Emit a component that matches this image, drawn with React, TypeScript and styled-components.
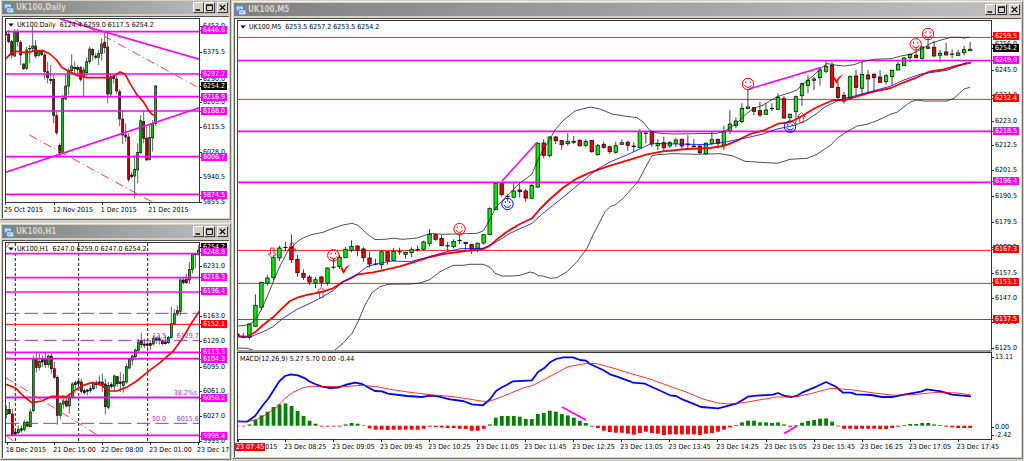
import React from "react";
import styled, { createGlobalStyle } from "styled-components";

const GlobalStyle = createGlobalStyle`
  *, *::before, *::after { box-sizing: border-box; }
  body {
    margin: 0;
    background: #d4d0c8;
    font-family: "DejaVu Sans Condensed", "DejaVu Sans", sans-serif;
    font-size: 7px;
    line-height: 8px;
    color: #000;
  }
`;

const MAGENTA = "#ff00ff";
const RED = "#ff0000";
const BLUE = "#0000ff";
const PURPLE = "#9a32cd";

/* ---------- layout ---------- */

const Desktop = styled.main`
  display: grid;
  grid-template-columns: minmax(0, 231fr) minmax(0, 791fr);
  column-gap: 1px;
  padding-right: 1px;
  height: 100vh;
  min-height: 320px;
  overflow: hidden;
`;

const SideColumn = styled.div`
  display: grid;
  grid-template-rows: minmax(0, 221fr) minmax(0, 237fr);
  row-gap: 3px;
  min-height: 0;
  margin: -1px 0 1px;
`;

const MainColumn = styled.div`
  display: grid;
  min-height: 0;
  padding: 1px 0 2px;
`;

const Frame = styled.section`
  display: flex;
  flex-direction: column;
  min-width: 0;
  min-height: 0;
  padding: 1px;
  border: 1px solid;
  border-color: #f4f2ee #77756e #77756e #f4f2ee;
  background: #d4d0c8;
`;

const TitleBar = styled.header`
  display: flex;
  align-items: center;
  height: 13px;
  flex: none;
  padding: 0 1px 0 2px;
  margin-bottom: 2px;
  background: linear-gradient(90deg, #808080, #c0c0c0);
`;

const Title = styled.h2`
  flex: 1;
  margin: 0 0 0 2px;
  font-size: 8px;
  line-height: 12px;
  font-weight: 700;
  color: #d4d0c8;
`;

const TitleButton = styled.button<{ $apart?: boolean }>`
  display: grid;
  place-items: center;
  width: 11px;
  height: 11px;
  margin-left: ${(p) => (p.$apart ? 2 : 0)}px;
  padding: 0;
  border: 1px solid;
  border-color: #fff #404040 #404040 #fff;
  background: #d4d0c8;
`;

const Client = styled.div<{ $footer: number }>`
  flex: 1;
  min-height: 0;
  display: grid;
  grid-template-columns: minmax(0, 1fr) 29px;
  grid-template-rows: minmax(0, 1fr) ${(p) => p.$footer}px;
  padding: 1px 0 0 2px;
  border: solid #55534e;
  border-width: 1px 0 0 1px;
  background: #fff;
  overflow: hidden;
`;

const Panes = styled.div<{ $split?: boolean }>`
  grid-column: 1 / -1;
  display: grid;
  grid-template-columns: minmax(0, 1fr) 29px;
  grid-template-rows: ${(p) => (p.$split ? "minmax(0, 330fr) minmax(0, 88fr)" : "minmax(0, 1fr)")};
  row-gap: 2px;
  min-height: 0;
`;

const Plot = styled.div<{ $open?: boolean; $edge?: string }>`
  position: relative;
  min-height: 0;
  border: 1px solid #333;
  border-left-color: ${(p) => p.$edge ?? "#333"};
  border-bottom-width: ${(p) => (p.$open ? 0 : 1)}px;
  box-shadow: ${(p) => (p.$open ? "0 2px 0 #9c9c9c" : "none")};
`;

const Drawing = styled.svg`
  display: block;
  position: absolute;
  inset: 0;
  width: 100%;
  height: 100%;
  overflow: hidden;
`;

const Legend = styled.p`
  position: absolute;
  top: 2px;
  left: 2px;
  display: flex;
  align-items: center;
  gap: 3px;
  margin: 0;
  white-space: pre;
`;

const Axis = styled.ol`
  position: relative;
  margin: 0;
  padding: 0;
  list-style: none;
`;

const PriceLabel = styled.li<{ $fill?: string }>`
  position: absolute;
  left: 1px;
  width: 26px;
  height: 8px;
  padding-left: 2px;
  transform: translateY(-50%);
  white-space: nowrap;
  background: ${(p) => p.$fill ?? "transparent"};
  color: ${(p) => (p.$fill ? "#fff" : "#000")};
  &::before {
    content: "";
    position: absolute;
    left: -1px;
    top: 4px;
    width: 2px;
    height: 1px;
    background: ${(p) => p.$fill ?? "#333"};
  }
`;

const TimeLabel = styled.li<{ $fill?: string }>`
  position: absolute;
  top: 3px;
  padding: 0 1px;
  white-space: nowrap;
  background: ${(p) => p.$fill ?? "transparent"};
  color: ${(p) => (p.$fill ? "#fff" : "#000")};
  &::before {
    content: "";
    position: absolute;
    left: 2px;
    top: -3px;
    width: 1px;
    height: 2px;
    background: #333;
  }
`;

const LevelLabel = styled.span`
  position: absolute;
  transform: translateY(-50%);
  color: ${PURPLE};
  white-space: nowrap;
`;

/* ---------- data types and helpers ---------- */

/** Drawing area in chart units: left, top, width, height. */
type View = [number, number, number, number];
/** Centre of the label, its text, and the fill of a highlighted label. */
type Tick = [number, string, string?];

const share = (value: number, start: number, size: number) => `${((value - start) / size) * 100}%`;

interface CandlesProps {
  data: string;
  x0: number;
  step: number;
  width: number;
  line: number;
  up: string;
  down: string;
}

/** Each entry: high, body top, body bottom, low, direction (g up, r down, k flat). */
function Candles({ data, x0, step, width, line, up, down }: CandlesProps) {
  return (
    <g stroke="#111" strokeWidth={line}>
      {data
        .trim()
        .split(/\s*\/\s*/)
        .map((entry, i) => {
          const [high, top, bottom, low, dir] = entry.split(" ");
          const x = x0 + step * i;
          const h = Number(bottom) - Number(top);
          return (
            <g key={i}>
              <line x1={x} x2={x} y1={high} y2={low} />
              <rect
                x={x - width / 2}
                y={top}
                width={width}
                height={Math.max(h, 0.2)}
                fill={dir === "g" ? up : dir === "r" ? down : "#111"}
              />
            </g>
          );
        })}
    </g>
  );
}

interface CurveProps {
  points: string;
  color: string;
  width: number;
  dash?: string;
}

const Curve = ({ points, color, width, dash }: CurveProps) => (
  <polyline points={points} fill="none" stroke={color} strokeWidth={width} strokeDasharray={dash} strokeLinejoin="round" />
);

interface LevelsProps {
  view: View;
  at: number[];
  color: string;
  width: number;
  dash?: string;
}

const Levels = ({ view, at, color, width, dash }: LevelsProps) => (
  <g stroke={color} strokeWidth={width} strokeDasharray={dash}>
    {at.map((y) => (
      <line key={y} x1={view[0]} x2={view[0] + view[2]} y1={y} y2={y} />
    ))}
  </g>
);

function Smiley({ x, y, color }: { x: number; y: number; color: string }) {
  return (
    <g transform={`translate(${x} ${y})`} fill="none" stroke={color} strokeWidth="1">
      <circle r="5.7" />
      <path d="M-2.2 -2.6v1.8M2.2 -2.6v1.8M-3.4 1.2Q-2.6 3.4 0 3.4T3.4 1.2" />
    </g>
  );
}

function Arrow({ x, y, up }: { x: number; y: number; up?: boolean }) {
  return (
    <path
      transform={`translate(${x} ${y}) scale(1 ${up ? -1 : 1})`}
      d="M-1.8 -5H1.8V1H4L0 5L-4 1H-1.8Z"
      fill="none"
      stroke={RED}
      strokeWidth="0.8"
    />
  );
}

const Check = ({ x, y }: { x: number; y: number }) => (
  <path transform={`translate(${x} ${y})`} d="M0 4L2 3L3.4 6Q6 2 10.5 0Q6 4 3.4 10Z" fill={RED} />
);

/* ---------- window chrome ---------- */

const AppIcon = () => (
  <svg width="10" height="10" viewBox="0 0 10 10" aria-hidden="true">
    <rect x="0" y="0" width="7.4" height="6" fill="#4f8fe0" />
    <rect x="0.7" y="1.6" width="6" height="3.8" fill="#e8f2ff" />
    <path d="M1.3 4.6V3M3 4.4V2.4M4.6 4V2.4" stroke="#4f8fe0" strokeWidth="0.7" />
    <rect x="2.6" y="4" width="7.4" height="6" fill="#4f8fe0" />
    <rect x="3.3" y="5.4" width="6" height="3.9" fill="#e8f2ff" />
    <path d="M4 8.6L5.4 6.4L6.7 8.2L8.4 6.2" stroke="#3f7fd6" strokeWidth="0.7" fill="none" />
  </svg>
);

function ChartWindow({ title, footer = 15, children }: { title: string; footer?: number; children: React.ReactNode }) {
  return (
    <Frame aria-label={title}>
      <TitleBar>
        <AppIcon />
        <Title>{title}</Title>
        <TitleButton aria-label="Minimize">
          <svg width="7" height="7" viewBox="0 0 7 7"><path d="M0.5 6h4.5" stroke="#000" strokeWidth="1.4" /></svg>
        </TitleButton>
        <TitleButton aria-label="Maximize">
          <svg width="7" height="7" viewBox="0 0 7 7"><path d="M0.5 0.8h6v5.7h-6zM0.5 1.4h6" fill="none" stroke="#000" strokeWidth="0.9" /></svg>
        </TitleButton>
        <TitleButton aria-label="Close" $apart>
          <svg width="7" height="7" viewBox="0 0 7 7"><path d="M0.8 0.8L6.2 6.2M6.2 0.8L0.8 6.2" stroke="#000" strokeWidth="1.2" /></svg>
        </TitleButton>
      </TitleBar>
      <Client $footer={footer}>{children}</Client>
    </Frame>
  );
}

const Quote = ({ text }: { text: string }) => (
  <Legend>
    <svg width="6" height="4" viewBox="0 0 6 4" aria-hidden="true"><path d="M0.4 0.6h5.2L3 3.6z" /></svg>
    <span>{text}</span>
  </Legend>
);

function PriceAxis({ ticks, view }: { ticks: Tick[]; view: View }) {
  return (
    <Axis>
      {ticks.map(([y, text, fill]) => (
        <PriceLabel key={text + y} $fill={fill} style={{ top: share(y, view[1], view[3]) }}>{text}</PriceLabel>
      ))}
    </Axis>
  );
}

function TimeAxis({ ticks, view }: { ticks: Tick[]; view: View }) {
  return (
    <Axis>
      {ticks.map(([x, text, fill]) => (
        <TimeLabel key={text} $fill={fill} style={{ left: share(x, view[0], view[2]) }}>{text}</TimeLabel>
      ))}
    </Axis>
  );
}

const box = (view: View) => view.join(" ");

/* ---------- daily chart ---------- */

const DAILY_VIEW: View = [18, 57, 579, 549];

const DAILY_CANDLES = `92 96 105 110 r/90 103 125 130 r/120 125 165 175 r/87 96 168 172 g/87 96 125 140 r/120 127 165 195 r/
190 192 206 210 r/140 150 205 210 g/135 145 147 190 k/80 138 145 155 g/120 138 168 175 r/150 153 166 170 g/150 153 163 168 r/
158 165 215 238 r/185 215 233 250 r/195 238 241 252 k/225 238 346 370 r/335 347 398 405 r/430 436 458 468 r/285 295 460 462 g/
225 258 297 300 g/205 212 258 285 g/163 198 212 218 g/185 202 206 225 k/195 202 208 225 k/198 203 238 245 r/200 210 228 288 g/
172 185 218 228 g/140 147 185 192 g/145 148 165 182 r/160 168 172 178 k/150 160 172 195 g/115 132 160 182 g/97 127 143 160 r/
97 141 282 310 r/220 231 282 292 g/225 229 236 250 r/228 237 273 283 r/268 275 357 378 r/332 357 405 432 r/370 405 411 425 k/
400 411 538 546 r/515 525 530 535 k/465 508 528 596 g/430 457 510 550 g/345 362 458 462 g/332 364 415 430 r/380 414 480 482 r/
375 412 478 482 g/360 370 414 455 g/255 258 370 378 g`;

const DAILY_PRICES: Tick[] = [
  [82, "6453.0"], [94, "6446.6", MAGENTA], [157, "6375.5"], [237, "6290.0"], [222, "6297.7", MAGENTA],
  [306, "6203.0"], [260, "6254.2", "#000"], [290, "6216.9", MAGENTA], [332, "6168.0", MAGENTA], [380, "6115.5"],
  [454, "6028.0"], [469, "6006.7", MAGENTA], [528, "5940.5"], [603, "5855.5"], [582, "5874.5", MAGENTA],
];

const DAILY_TIMES: Tick[] = [[9, "25 Oct 2015"], [155, "12 Nov 2015"], [299, "1 Dec 2015"], [442, "21 Dec 2015"]];

const DailyChart = () => (
  <ChartWindow title="UK100,Daily">
    <Panes>
      <Plot>
        <Drawing viewBox={box(DAILY_VIEW)} preserveAspectRatio="none" role="img" aria-label="Daily candles">
          <Candles data={DAILY_CANDLES} x0={17} step={9} width={6} line={2} up="#00c000" down="#b00000" />
          <Levels view={DAILY_VIEW} at={[95, 222, 290, 333, 470, 583]} color={MAGENTA} width={5} />
          <Curve points="180,57 598,178" color={MAGENTA} width={5} />
          <Curve points="17,517 598,323" color={MAGENTA} width={5} />
          <Curve points="225,60 590,260" color="#ff4040" width={3} dash="26 10 3 10" />
          <Curve points="88,405 455,605" color="#ff4040" width={3} dash="26 10 3 10" />
          <Curve
            points="17,176 30,163 50,154 80,158 105,152 130,152 150,162 170,180 185,202 205,213 230,226 260,233 330,233 345,226 360,216 375,222 390,250 410,283 430,305 445,330 455,342 467,347"
            color={RED}
            width={5}
          />
        </Drawing>
        <Quote text="UK100,Daily  6124.4 6259.0 6117.5 6254.2" />
      </Plot>
      <PriceAxis ticks={DAILY_PRICES} view={DAILY_VIEW} />
    </Panes>
    <TimeAxis ticks={DAILY_TIMES} view={[15, 0, 585, 0]} />
  </ChartWindow>
);

/* ---------- hourly chart ---------- */

const HOURLY_VIEW: View = [18, 63, 579, 597];

const HOURLY_CANDLES = `550 562 578 590 g/540 562 575 578 r/560 576 640 642 r/625 630 636 640 k/610 622 632 636 g/610 620 625 632 k/
595 602 622 628 g/598 600 612 615 r/560 570 614 616 g/400 410 566 570 g/390 410 436 452 r/395 418 436 445 g/400 412 420 435 k/
392 412 428 438 r/398 402 428 436 g/395 402 440 455 r/420 440 466 470 r/460 466 580 608 r/540 545 580 592 g/520 537 546 560 g/
525 537 552 556 r/515 525 552 575 g/480 486 526 530 g/475 482 488 505 k/475 478 484 500 k/470 480 508 515 r/500 506 512 518 k/
500 504 508 520 k/490 500 505 512 k/478 485 500 505 g/475 482 488 500 k/460 480 484 490 k/455 480 490 510 r/470 486 554 577 r/
480 490 556 562 g/480 488 494 500 k/458 462 492 510 g/462 464 485 495 r/450 480 484 510 k/455 478 490 512 g/425 434 480 485 g/
408 412 438 442 g/398 402 414 430 g/380 384 404 412 g/350 360 385 395 g/333 357 368 378 r/350 366 370 378 k/355 366 370 378 k/
355 364 370 385 k/340 350 366 370 g/345 350 354 365 k/340 350 354 368 k/352 356 365 370 r/340 360 365 368 k/342 346 362 366 g/
255 305 346 350 g/262 275 305 310 g/250 266 276 282 r/168 174 268 280 g/165 174 182 188 k/155 172 182 186 r/120 142 174 186 g/
95 98 142 155 g/94 96 98 138 k/70 85 97 100 g`;

const HOURLY_PRICES: Tick[] = [
  [78, "6254.2", "#000"], [94, "6248.8", MAGENTA], [134, "6231.0"], [166, "6216.3", MAGENTA], [209, "6196.4", MAGENTA],
  [283, "6163.0"], [306, "6152.1", RED], [358, "6129.0"], [391, "6113.3", MAGENTA], [410, "6104.3", MAGENTA],
  [433, "6095.0"], [506, "6061.0"], [527, "6050.2", MAGENTA], [580, "6027.0"], [655, "5993.0"], [639, "5998.4", MAGENTA],
];

const HOURLY_TIMES: Tick[] = [
  [14, "18 Dec 2015"], [157, "21 Dec 15:00"], [300, "22 Dec 08:00"], [445, "23 Dec 01:00"], [588, "23 Dec 17:00"],
];

const FIBO_LABELS: [number, number, string][] = [
  [457, 342, "12.5"], [530, 342, "6129.7"], [521, 513, "38.2%s"], [456, 592, "50.0"], [530, 592, "6015.6"],
];

const HourlyChart = () => (
  <ChartWindow title="UK100,H1">
    <Panes>
      <Plot>
        <Drawing viewBox={box(HOURLY_VIEW)} preserveAspectRatio="none" role="img" aria-label="Hourly candles">
          <g stroke="#222" strokeWidth="3" strokeDasharray="9 6">
            <path d="M46 63V660M236 63V660M443 63V660" />
          </g>
          <Candles data={HOURLY_CANDLES} x0={19} step={9} width={6} line={2} up="#00c000" down="#b00000" />
          <Levels view={HOURLY_VIEW} at={[274, 355, 604]} color={PURPLE} width={3} dash="40 16" />
          <Levels view={HOURLY_VIEW} at={[307]} color={RED} width={3} />
          <Levels view={HOURLY_VIEW} at={[95, 167, 210, 391, 410, 527, 640]} color={MAGENTA} width={5} />
          <Levels view={HOURLY_VIEW} at={[525]} color={PURPLE} width={2} />
          <Curve points="18,467 310,650" color="#ff4040" width={3} dash="26 10 3 10" />
          <Curve points="18,640 40,657" color="#ff4040" width={3} />
          <Curve points="16,80 28,63" color="#ff4040" width={3} />
          <Curve
            points="18,487 45,497 70,522 95,542 125,537 155,523 200,524 225,505 250,490 275,482 300,488 330,507 350,507 380,496 410,477 445,448 480,422 520,387 550,345 575,302 598,268"
            color={RED}
            width={5}
          />
        </Drawing>
        {FIBO_LABELS.map(([x, y, text]) => (
          <LevelLabel
            key={text}
            style={{ left: share(x, HOURLY_VIEW[0], HOURLY_VIEW[2]), top: share(y, HOURLY_VIEW[1], HOURLY_VIEW[3]) }}
          >
            {text}
          </LevelLabel>
        ))}
        <Quote text="UK100,H1  6247.0 6259.0 6247.0 6254.2" />
      </Plot>
      <PriceAxis ticks={HOURLY_PRICES} view={HOURLY_VIEW} />
    </Panes>
    <TimeAxis ticks={HOURLY_TIMES} view={[15, 0, 585, 0]} />
  </ChartWindow>
);

/* ---------- five-minute chart ---------- */

const M5_VIEW: View = [238, 21, 753, 329];
const MACD_VIEW: View = [238, 353, 753, 86];
const M5_X0 = 237.4;
const M5_STEP = 6.006;

const M5_CANDLES = `333 334 336 338 k/333 336.5 337.3 338 k/324 324 337.3 339.7 g/294.3 305.3 326.3 326.3 g/281.7 282.3 307.3 310.3 g/
275 278 283 285.3 g/255 257.3 277.7 280 g/245.7 248 258 261 g/241.7 247.3 247.6 251 k/234.3 247 259.7 263 r/255 259.3 272.7 276.7 r/
269.3 273.3 277.3 280 r/275 277 282 285 r/277 279.7 283 288 g/275.7 277 282.3 286.3 r/267.3 268 283 285.7 g/259 267 267.3 269.3 k/
255 257.3 266.7 269 g/247 249.3 257.7 257.7 g/240.3 246.3 250.3 252.3 g/245.3 246 250.3 256.3 r/247.3 249 257.7 261.7 r/
251.7 258 264 267.7 r/258.7 264 264.3 265.3 k/250.3 251.7 264.7 269 g/251.7 251.7 261 264.7 r/248 251.3 260.3 261 g/
247.7 251.7 252 255 k/251.7 252.3 254.3 258.7 g/247.3 249.3 252.7 257 g/245.7 249.3 249.7 251.7 k/240.7 242 249.3 250.7 g/
229 234.3 243.3 246.3 g/233.7 234.7 239.3 240.7 r/235 238.3 245.7 246 r/242 245.7 246 250 k/239.3 241.3 246.7 248.3 g/
235 240.3 240.7 244 k/242 242.3 243.7 250 r/244 244.3 249.3 254 r/242.3 243.3 249.3 252.3 g/234.7 234.7 243 244.7 g/
207.3 208.7 234.7 234.7 g/183.3 183.3 209.7 209.7 g/182.7 183.3 194.7 196.7 r/194 196.3 196.6 201.7 k/183.3 191 197.3 197.3 g/
184.3 190 191.7 197.3 r/189 191 198 201.7 r/183.3 185.3 198.3 198.3 g/142.3 143.3 187 188 g/139.3 143 155.3 158.3 r/
136 137 155.7 157.7 g/136 137 140.7 144 r/140 140.7 144.7 149.7 r/133.3 141.3 143.7 145.7 g/136 141.3 142.3 144 g/
139.3 140.3 145.7 146.7 r/139.3 141.3 145.3 147.3 g/140.3 140.3 151.7 152.7 r/144 145.7 154.7 155.7 g/141.7 144.3 147.3 148.7 r/
145.7 146.7 151.7 153.7 r/141.7 145.7 152.3 153.7 g/139.3 142.7 144.3 145 g/140.7 142.3 145.3 150.7 r/142.3 146 146.6 152 k/
129 131.7 147.7 147.7 g/131.7 133 133.4 143.3 k/131.7 132.3 144 147 r/139 143.3 145.7 150 g/136.7 142.7 147.7 151 r/
141 142.7 146 148 g/138.3 140 143.3 147 g/138.7 139.3 146 148.7 r/135.3 144 144.8 148.3 k/139 146 146.8 147 k/
145 146 152.7 154.3 r/142 143.3 153.7 154.7 g/132 139.7 143.3 145 g/138.7 139.3 143.3 148.7 r/125.7 131.7 145 150 g/
110 124 130.7 134 g/117.3 121 125.7 128 g/103.3 108.3 121.7 123.3 g/89 107 108.3 109.3 g/107 107.7 111.3 115 r/
101.7 110.7 115 117 r/103.3 110 114.3 115 g/103.3 108.3 108.7 111 k/93.3 97.3 109.3 109.3 g/96 98.7 118 119 r/
113.3 114.3 117.7 122.3 g/95.7 96.7 111.7 124 g/82.7 83.7 95.7 105.7 g/75.3 80.3 85.3 93.3 g/76.7 79 80.3 90 g/
68.7 70 77.7 85.7 g/60 66.3 71.3 73.3 g/61.7 65.3 87.3 87.7 r/80.7 87.3 97.3 100 r/91.7 95.3 101 103.7 r/75.3 76.7 97.7 100 g/
70 76 87.3 95.3 r/62 74.3 88.3 95 g/70 75 79 92.7 r/73.3 74.3 77.7 91.7 r/70 77 82.3 83 r/74 75.7 81.7 84.3 g/
70.3 70.3 76.7 86 g/61.7 64.3 70 70 g/57 58 65.7 65.7 g/53.3 54.3 57.7 62.3 g/47.7 55.3 57.7 58.3 r/46 47 58.3 59.3 g/
37.7 47 48.3 48.3 g/40.7 47.3 56 56.7 r/50 53.3 55.3 62.3 g/42.7 52 55 55 r/49.3 54 54.3 58.3 k/50 53 55.7 55.7 g/
46 49.7 52.7 55.3 g/42 49.3 50.7 50.7 g`;

const BAND_UPPER =
  "237,326 245,325.5 252,323 258,316 264,304 270,290 276,275 282,262 288,251 292,247 298,241 304,237.5 312,234.5 323,232.3 333,228.3 343,225 352,223.3 358,225.3 368,234.7 375,239.5 385,239.3 393,238.3 403,239.3 417,238 430,233.5 443,234.3 477,233.3 483,231 488,223 496,207 510,192.7 520,183 527,178 532,174 537,161.7 543,150 550,139 555,130 563,120.7 575,111 590,107 600,109 612,114 624,116 630,116.7 637,117.7 643,122 650,130.7 657,133 673,134 717,133.3 725,131 737,123 747,113.3 753,108.7 763,105 777,96.7 790,92.7 797,90 803,84 813,76 820,69 827,63.5 837,65.3 844,66 854,64.7 862,61.7 874,59.3 891,58.7 901,56 911,54.3 921,49.3 931,43.3 941,40 951,37.3 961,37.3 964,38.3 969,37";
const BAND_LOWER_LEFT = "237,348 247,348.3 253,350";
const BAND_LOWER =
  "335,350 343,343.3 352,333.3 358,321.7 365,305 372,292.7 380,286.7 388,284.3 410,284 420,283 430,279.5 440,271.7 453,265.3 463,265.3 470,264.3 483,264.3 490,267.3 495,273.3 502,276 513,276 520,275.3 530,272 535,273.3 538,275.7 543,276 550,278.3 557,277.7 567,271.7 577,261.7 587,248.3 593,235 600,221.7 605,211.7 610,206.7 615,205 623,198.3 630,190.5 638,181.7 645,168.3 652,155.7 657,154.7 673,153.7 697,154.3 720,153.7 732,155.7 745,161.3 760,162.3 778,163.3 790,159.3 807,158.3 817,154.3 824,149.3 831,145 837,138.3 847,131.7 857,126 867,124.3 877,120.7 891,114 897,112.3 904,106.7 911,101.7 917,100 924,101 947,101 954,98.3 964,89 970,87.3";
const MA_RED =
  "237,336 247,336.7 255,332.3 263,325 273,317.3 282,308.3 290,301 298,297.3 308,294.7 320,292.3 333,288.3 343,281.7 352,277.7 358,274.3 373,272.3 387,269.3 400,266.3 413,262.3 430,257 443,254 463,251.3 483,249 490,245.7 497,239.3 507,231.7 520,224 532,218.3 540,209 550,199 563,187.7 577,178.3 590,172.7 607,166.7 630,159.7 647,154.3 663,151.3 687,149 710,148 725,145.7 737,140.7 750,134 763,130.7 778,123.7 790,122.3 800,117.3 813,109.3 824,104 834,100 844,100.3 857,96.3 874,91.7 891,88 904,82.3 917,77.3 929,71.7 944,69.3 957,65.7 971,62.7";
const MA_BLUE =
  "237,337 250,337 263,331.7 273,326.7 283,318.3 297,309.3 310,303.3 320,298.3 333,290.7 343,281.7 357,274.3 367,266.7 377,263.7 392,261 410,261.7 430,256.5 443,252.7 460,248.7 483,248.3 495,242.7 510,233.3 532,223.3 543,213.3 563,197.3 580,183.3 597,169.3 610,162 630,153.5 652,143.3 677,144 707,144.7 727,141.7 747,137.7 763,134 777,129 795,125.3 807,120 817,113.3 824,107.5 837,101 844,98.7 857,95.3 874,90.7 891,86 904,80 921,74 947,70.3 957,66.7 967,62.3";

const MACD_MAIN =
  "237,421.3 247,421.7 255,416 263,405 268,399 279,381.7 285,376 291,374.3 298,375.3 305,378.3 309,381.3 315,384 322,386.7 330,388 338,387.7 345,385 355,382.7 362,384 368,387.3 375,391 382,391.3 388,393.7 407,396 422,397 430,395.7 438,396.3 450,399.3 463,401 472,404.3 483,405.3 490,399.3 496,391 502,387.3 507,384.7 513,381.3 532,380.3 538,372 544,368.3 550,362.3 556,359 563,357.3 573,357.3 580,360 586,360.7 590,364 603,370 610,374.3 617,376.7 630,381.3 633,382.7 645,383.7 657,389.3 670,395.3 676,396 683,399.7 693,403.7 701,407 718,408.3 725,406.7 737,403.3 748,396.7 757,395.7 773,394.7 778,393 785,396 792,397 797,395.7 802,392.7 817,386.3 826,382 836,386.7 843,392.7 851,392.7 856,394.3 871,395 882,397 892,397 904,394.7 921,391.7 927,389.3 941,391.3 952,394.7 971,396.3";
const MACD_SIGNAL =
  "237,421.7 247,421.7 257,419.3 267,414 277,406.7 285,398.3 293,392.3 303,387.7 310,386.3 343,386.7 362,385.3 377,386.7 390,389.3 410,392.3 430,394.7 450,396.3 467,398.7 487,402 495,399.3 507,394.7 523,388 533,385.3 547,378 557,372.7 568,366.7 577,365 587,363.3 597,363.7 613,368 630,373.3 650,379 670,386.3 687,392.3 703,399 718,403 730,404 743,402.7 757,400.3 777,397 797,396.7 813,393 827,389.3 832,388.3 851,389.7 874,393 894,395.3 917,394.3 937,392.3 957,393 970,394.7";
const MACD_BARS = [
  -0.6, -0.6, 1.3, 5.7, 10.3, 14, 18.7, 21.3, 22.3, 19.7, 14.7, 9.7, 5, 2, -0.8, -0.8, -0.8, -0.8, 1.3, 2.7, 2, 0.5, -2.7, -4, -4, -4.3,
  -4, -4, -4, -4, -4, -3, -1, -1.3, -1.7, -2.3, -2.3, -3, -3.3, -5, -5, -3, 1.3, 8, 9.7, 9.7, 9.7, 9, 6.7, 6.7, 11.7, 12.7, 15, 14,
  11.7, 10.3, 8, 5, 2.7, -0.8, -2.3, -5, -6.3, -7, -7, -8, -9, -7.3, -6, -7.3, -8, -9.3, -8.7, -8.7, -8.7, -8.7, -8.7, -9.3, -8, -7.3,
  -6, -4, -1.7, 0.7, 3.3, 5, 5, 3.3, 3.3, 2.7, 3.3, 1.3, -1, 0.7, 3, 4.7, 5.7, 7, 7.3, 4, -0.7, -3, -3, -3.3, -3, -3, -3, -3.3, -3.3,
  -2.3, -1, 0.7, 1.7, 1.7, 2.7, 2.7, 1.3, 0.7, -1, -1.7, -2.3, -2.3, -2.3,
];
const MACD_ZERO = 425.7;

const M5_PRICES: Tick[] = [
  [44.5, "6256.0"], [36.5, "6259.5", RED], [49, "6254.2", "#000"], [60.5, "6249.0", MAGENTA], [70.5, "6245.0"],
  [95.5, "6234.0"], [99, "6232.4", RED], [121.3, "6223.0"], [131.3, "6218.5", MAGENTA], [146, "6212.5"], [171, "6201.5"],
  [182, "6196.4", MAGENTA], [196.5, "6190.5"], [222, "6179.5"], [247, "6168.5"], [249.7, "6167.3", RED], [273, "6157.5"],
  [282.7, "6153.1", RED], [297.7, "6147.0"], [322.3, "6136.0"], [319, "6137.5", RED], [348, "6125.0"],
];
const MACD_PRICES: Tick[] = [[358, "13.11"], [426.3, "0.00"], [434.5, "-2.42"]];

const M5_TIMES: Tick[] = [
  [236, "23 Dec 2015"],
  [235, "23 07:45", RED],
  ...["08:25", "09:05", "09:45", "10:25", "11:05", "11:45", "12:25", "13:05", "13:45", "14:25", "15:05", "15:45", "16:25", "17:05", "17:45"].map(
    (time, k): Tick => [283 + 48.05 * k, `23 Dec ${time}`],
  ),
];

const SMILEYS: [number, number, string][] = [
  [333.3, 255.3, RED], [459.5, 229, RED], [507.5, 204, BLUE], [748, 84, RED], [790, 126.7, BLUE], [915.7, 44.3, RED], [928, 34, RED],
];

const MinuteChart = () => (
  <ChartWindow title="UK100,M5" footer={17}>
    <Panes $split>
      <Plot $open $edge="#d00000">
        <Drawing viewBox={box(M5_VIEW)} preserveAspectRatio="none" role="img" aria-label="Five-minute candles">
          <Levels view={M5_VIEW} at={[37.4, 99.4, 250.4, 283.4, 319.5]} color="#ff2020" width={1} />
          <Candles data={M5_CANDLES} x0={M5_X0} step={M5_STEP} width={3.4} line={0.8} up="#00f000" down="#f00000" />
          <Levels view={M5_VIEW} at={[60.5, 131.4, 182.4]} color={MAGENTA} width={1.6} />
          <Curve points={BAND_UPPER} color="#222" width={0.8} />
          <Curve points={BAND_LOWER_LEFT} color="#222" width={0.8} />
          <Curve points={BAND_LOWER} color="#222" width={0.8} />
          <Curve points={MA_RED} color={RED} width={1.8} />
          <Curve points={MA_BLUE} color={BLUE} width={0.8} />
          <Curve points="502,181 537,142.5" color={MAGENTA} width={1.6} />
          <Curve points="749,89 821,67.5" color={MAGENTA} width={1.6} />
          {SMILEYS.map(([x, y, color]) => (
            <Smiley key={x} x={x} y={y} color={color} />
          ))}
          <Arrow x={272.3} y={253} />
          <Arrow x={292} y={248} />
          <Arrow x={321.3} y={292.5} up />
          <Arrow x={801.5} y={117.5} up />
          <Check x={340.3} y={264} />
          <Check x={833} y={74} />
        </Drawing>
        <Quote text="UK100,M5  6253.5 6257.2 6253.5 6254.2" />
      </Plot>
      <PriceAxis ticks={M5_PRICES} view={M5_VIEW} />
      <Plot $edge="#d00000">
        <Drawing viewBox={box(MACD_VIEW)} preserveAspectRatio="none" role="img" aria-label="MACD indicator">
          {MACD_BARS.map((v, i) => (
            <rect
              key={i}
              x={M5_X0 + M5_STEP * i - 1.8}
              y={v > 0 ? MACD_ZERO - v : MACD_ZERO}
              width="3.8"
              height={Math.abs(v)}
              fill={v > 0 ? "#008000" : RED}
            />
          ))}
          <Curve points={MACD_MAIN} color={BLUE} width={1.8} />
          <Curve points={MACD_SIGNAL} color={RED} width={0.8} />
          <Curve points="562,407 586,420" color={MAGENTA} width={1.6} />
          <Curve points="784,433.5 797,426" color={MAGENTA} width={1.6} />
        </Drawing>
        <Legend>MACD(12,26,9) 5.27 5.70 0.00 -0.44</Legend>
      </Plot>
      <PriceAxis ticks={MACD_PRICES} view={MACD_VIEW} />
    </Panes>
    <TimeAxis ticks={M5_TIMES} view={[237, 0, 755, 0]} />
  </ChartWindow>
);

export default function App() {
  return (
    <>
      <GlobalStyle />
      <Desktop>
        <SideColumn>
          <DailyChart />
          <HourlyChart />
        </SideColumn>
        <MainColumn>
          <MinuteChart />
        </MainColumn>
      </Desktop>
    </>
  );
}
